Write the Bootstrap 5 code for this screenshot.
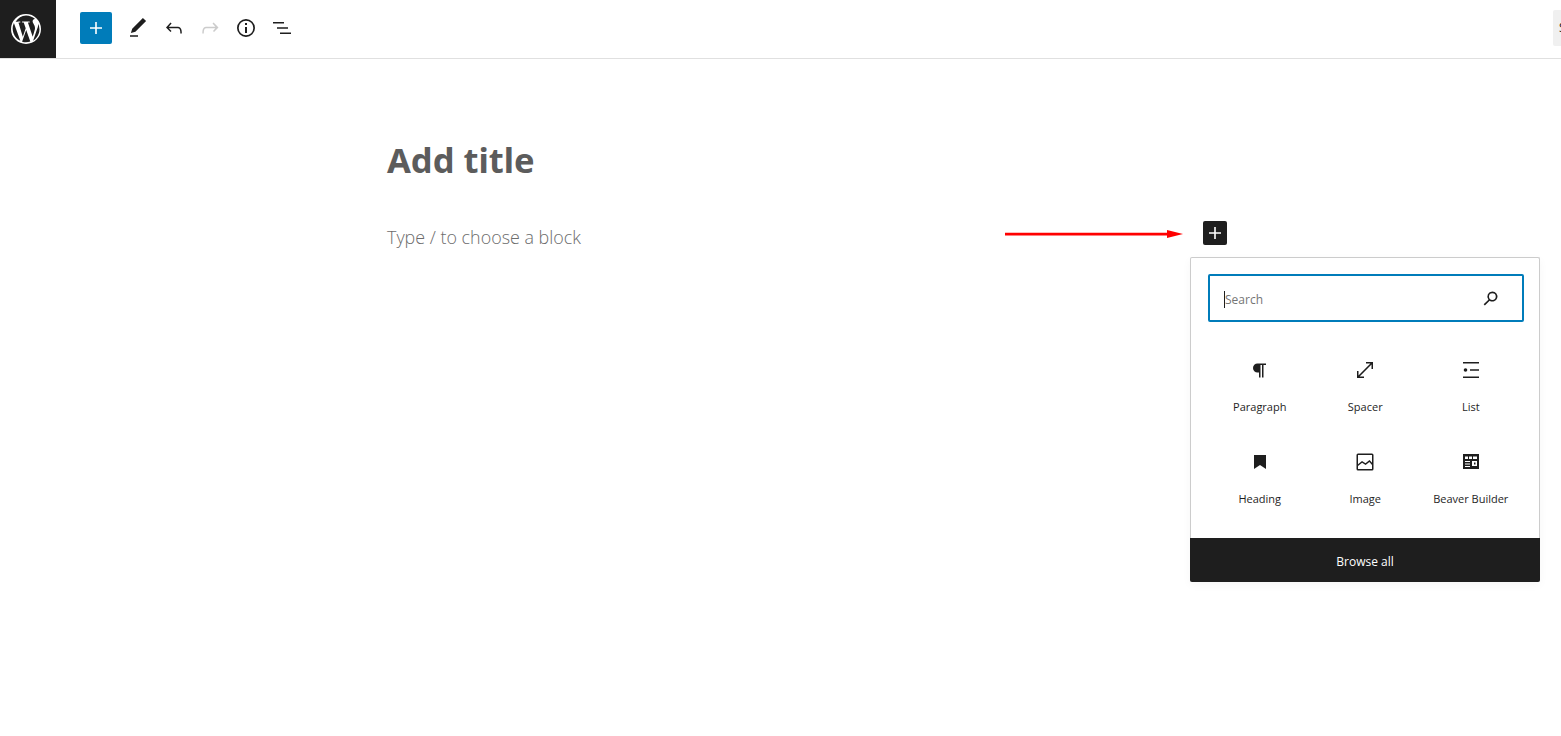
<!DOCTYPE html>
<html lang="en">
<head>
    <meta charset="UTF-8">
    <meta name="viewport" content="width=device-width, initial-scale=1.0">
    <title>Add title</title>
    <link href="https://cdn.jsdelivr.net/npm/bootstrap@5.3.0/dist/css/bootstrap.min.css" rel="stylesheet">
    <style>
        body { font-family: "Open Sans", "Noto Sans", sans-serif; color: #1e1e1e; background: #fff; overflow: hidden; height: 736px; position: relative; }
        .edit-header { height: 59px; border-bottom: 1px solid #e0e0e0; }
        .wp-logo { width: 56px; height: 58px; background: #1e1e1e; padding-right: 4px; }
        .tool-strip { margin-left: 24px; height: 56px; }
        .add-btn { width: 32px; height: 32px; background: #007cba; border-radius: 2px; margin-right: 8px; }
        .tool-btn { width: 36px; height: 32px; }
        .save-stub { width: 8px; height: 36px; margin-top: 10px; padding-left: 6px; background: #f0f0f0; border-radius: 2px 0 0 2px; overflow: hidden; font-size: 12px; line-height: 36px; white-space: nowrap; }
        .post-column { width: 787px; margin: 0 auto; }
        .post-heading { font-family: "Noto Sans", sans-serif; font-size: 34.5px; font-weight: 700; line-height: 46px; color: #5c5c5c; margin: 78px 0 0; }
        .post-hint { font-family: "Open Sans", sans-serif; font-size: 17.9px; line-height: 24px; color: #6c6c6c; margin: 42px 0 0; font-weight: 300; }
        .red-arrow { position: absolute; left: 1004px; top: 228px; }
        .block-plus { position: absolute; left: 1203px; top: 221px; width: 24px; height: 24px; background: #1e1e1e; border-radius: 2px; }
        .inserter-pop { position: absolute; left: 1190px; top: 257px; width: 350px; height: 325px; border: 1px solid #ccc; border-bottom: 0; border-radius: 2px; background: #fff; box-shadow: 0 3px 10px rgba(0,0,0,.04); }
        .search-wrap { margin: 16px 15px 0 17px; height: 48px; border: 2px solid #007cba; border-radius: 2px; padding: 0 20px 2px 14px; }
        .search-text { font-size: 12px; color: #757575; border-left: 1px solid #1e1e1e; line-height: 17px; margin-top: 4px; }
        .block-grid { display: grid; grid-template-columns: repeat(3, 105.5px); margin: 24px 0 0 16px; row-gap: 0; }
        .block-cell { height: 92px; padding-top: 12px; }
        .block-icon { height: 24px; }
        .block-name { font-size: 11px; line-height: 15px; margin-top: 17px; text-align: center; }
        .browse-bar { position: absolute; left: -1px; right: -1px; bottom: 0; height: 44px; padding-top: 4px; background: #1e1e1e; color: #fff; font-size: 12px; border-radius: 0 0 2px 2px; }
    </style>
</head>
<body>
    <header class="edit-header d-flex justify-content-between">
        <div class="d-flex">
            <div class="wp-logo d-flex align-items-center justify-content-center">
                <svg width="32" height="32" viewBox="0 0 32 32" fill="#fff">
                    <path d="M16 1a15 15 0 1 0 0 30 15 15 0 0 0 0-30zm0 1.500a13.500 13.500 0 0 1 9.100 3.500h-.3c-1.300 0-2.200 1.100-2.200 2.300 0 1.100.6 2 1.300 3.100.5.900 1.100 2 1.100 3.700 0 1.100-.4 2.500-1 4.300l-1.300 4.400-4.800-14.200c.8 0 1.500-.1 1.500-.1.700-.1.600-1.100-.1-1.100 0 0-2.100.2-3.500.2-1.300 0-3.400-.2-3.400-.2-.7 0-.8 1.100-.1 1.100 0 0 .7.100 1.400.1l2 5.600-2.900 8.500L8.500 9.700c.8 0 1.500-.1 1.500-.1.700-.1.600-1.100-.1-1.100 0 0-2.100.2-3.500.2h-.8A13.500 13.500 0 0 1 16 2.500zM3.900 10.100l6.400 17.700A13.500 13.500 0 0 1 3.900 10.100zm12.300 7l4.100 11.300.1.200a13.500 13.500 0 0 1-8.300.2zm11.900-6.700a13.500 13.500 0 0 1-5 17.300l4.100-11.900c.8-1.900 1-3.400 1-4.800 0-.5 0-.9-.1-.6z"/>
                </svg>
            </div>
            <div class="tool-strip d-flex align-items-center">
                <div class="add-btn d-flex align-items-center justify-content-center">
                    <svg width="24" height="24" viewBox="0 0 24 24" fill="#fff"><path d="M18 11.200h-5.200V6h-1.600v5.200H6v1.600h5.200V18h1.600v-5.200H18z"/></svg>
                </div>
                <div class="tool-btn d-flex align-items-center justify-content-center">
                    <svg width="24" height="24" viewBox="0 0 24 24" fill="#1e1e1e"><path d="M20.100 5.100 16.900 2 6.200 12.700l-1.300 4.400 4.500-1.300zM4 20.800h8v-1.500H4z"/></svg>
                </div>
                <div class="tool-btn d-flex align-items-center justify-content-center">
                    <svg width="24" height="24" viewBox="0 0 24 24" fill="#1e1e1e"><path d="M18.300 11.700c-.6-.6-1.400-.9-2.300-.9H6.700l2.900-3.300-1.100-1-4.500 5L8.500 16l1-1-2.700-2.700H16c.5 0 .9.200 1.300.5 1 1 1 3.400 1 4.500v.3h1.500v-.2c0-1.500 0-4.300-1.500-5.700z"/></svg>
                </div>
                <div class="tool-btn d-flex align-items-center justify-content-center">
                    <svg width="24" height="24" viewBox="0 0 24 24" fill="#ccc"><path d="M15.600 6.500l-1.100 1 2.900 3.300H8c-.9 0-1.700.3-2.300.9-1.400 1.500-1.400 4.200-1.400 5.700v.2h1.500v-.3c0-1.100 0-3.500 1-4.500.3-.3.700-.5 1.300-.5h9.200L15 15l1 1 4.500-4.500z"/></svg>
                </div>
                <div class="tool-btn d-flex align-items-center justify-content-center">
                    <svg width="24" height="24" viewBox="0 0 24 24" fill="#1e1e1e"><path d="M12 3a9 9 0 1 0 0 18 9 9 0 0 0 0-18zm0 16.300a7.300 7.300 0 1 1 0-14.600 7.300 7.300 0 0 1 0 14.600zM11 7h2v2h-2zm0 4h2v6h-2z"/></svg>
                </div>
                <div class="tool-btn d-flex align-items-center justify-content-center">
                    <svg width="24" height="24" viewBox="0 0 24 24" fill="#1e1e1e"><path d="M3 6h11v1.500H3zM7 11.200h11v1.500H7zM10 16.500h11V18H10z"/></svg>
                </div>
            </div>
        </div>
        <div class="save-stub">Save draft</div>
    </header>

    <main class="post-column">
        <h1 class="post-heading">Add title</h1>
        <p class="post-hint">Type / to choose a block</p>
    </main>

    <svg class="red-arrow" width="182" height="12" viewBox="0 0 182 12">
        <path d="M1 4.800h162v2.600H1z" fill="#f00"/>
        <path d="M163 2l16 4-16 4z" fill="#f00"/>
    </svg>

    <div class="block-plus d-flex align-items-center justify-content-center">
        <svg width="24" height="24" viewBox="0 0 24 24" fill="#fff"><path d="M18 11.200h-5.200V6h-1.600v5.200H6v1.600h5.200V18h1.600v-5.200H18z"/></svg>
    </div>

    <div class="inserter-pop">
        <div class="search-wrap d-flex align-items-center justify-content-between">
            <span class="search-text">Search</span>
            <svg width="22" height="22" viewBox="0 -1 24 24" fill="#1e1e1e"><path fill-rule="evenodd" d="M13.500 5a5.500 5.500 0 0 0-4.300 8.900L4 19l1.300 1.300 5.200-5.200A5.500 5.500 0 1 0 13.500 5zm0 9.200a3.700 3.700 0 1 1 0-7.400 3.700 3.700 0 0 1 0 7.400z"/></svg>
        </div>
        <div class="block-grid">
            <div class="block-cell">
                <div class="block-icon d-flex justify-content-center">
                    <svg width="24" height="24" viewBox="0 0 24 24" fill="#1e1e1e"><path d="M18 5.500H9.500a4.500 4.500 0 0 0 0 9H11v5h1.500v-12.500h1.500v12.500h1.500V7H18z"/></svg>
                </div>
                <div class="block-name">Paragraph</div>
            </div>
            <div class="block-cell">
                <div class="block-icon d-flex justify-content-center">
                    <svg width="24" height="24" viewBox="0 0 24 24" fill="#1e1e1e"><path d="M13 4v1.500h4.400l-11.900 11.900V13H4v7h7v-1.500H6.600L18.500 6.600V11H20V4z"/></svg>
                </div>
                <div class="block-name">Spacer</div>
            </div>
            <div class="block-cell">
                <div class="block-icon d-flex justify-content-center">
                    <svg width="24" height="24" viewBox="0 0 24 24" fill="#1e1e1e"><path d="M4 4h16v1.500H4zM4 18.500h16V20H4zM11 11.200h9v1.500h-9z"/><circle cx="6.500" cy="12" r="1.800"/></svg>
                </div>
                <div class="block-name">List</div>
            </div>
            <div class="block-cell">
                <div class="block-icon d-flex justify-content-center">
                    <svg width="24" height="24" viewBox="0 0 24 24" fill="#1e1e1e"><path d="M6 5h12v14l-6-4-6 4z"/></svg>
                </div>
                <div class="block-name">Heading</div>
            </div>
            <div class="block-cell">
                <div class="block-icon d-flex justify-content-center">
                    <svg width="24" height="24" viewBox="0 0 24 24" fill="#1e1e1e"><path d="M19 3.500H5A1.500 1.500 0 0 0 3.500 5v14A1.500 1.500 0 0 0 5 20.500h14a1.500 1.500 0 0 0 1.500-1.500V5A1.500 1.500 0 0 0 19 3.500zM5 5h14v7.700l-2.500-2.700-4 3.300-3.500-2.300L5 14.300zm14 14H5v-2.900l4.100-3.300 3.500 2.300 3.800-3.100 2.600 2.900z"/></svg>
                </div>
                <div class="block-name">Image</div>
            </div>
            <div class="block-cell">
                <div class="block-icon d-flex justify-content-center">
                    <svg width="24" height="24" viewBox="0 0 24 24" fill="#1e1e1e"><path fill-rule="evenodd" d="M4 4h16v15H4zM6 6.500V9h3V6.500zm4 0V9h3V6.500zm4 0V9h4V6.500zM6 11v1h5v-1zm0 2.500v1h5v-1zm0 2.500v1h5v-1zm7-5v5h5v-5zm2 1.500h1.500v2H15z"/></svg>
                </div>
                <div class="block-name">Beaver Builder</div>
            </div>
        </div>
        <div class="browse-bar d-flex align-items-center justify-content-center">Browse all</div>
    </div>

    <script src="https://cdn.jsdelivr.net/npm/bootstrap@5.3.0/dist/js/bootstrap.bundle.min.js"></script>
</body>
</html>
